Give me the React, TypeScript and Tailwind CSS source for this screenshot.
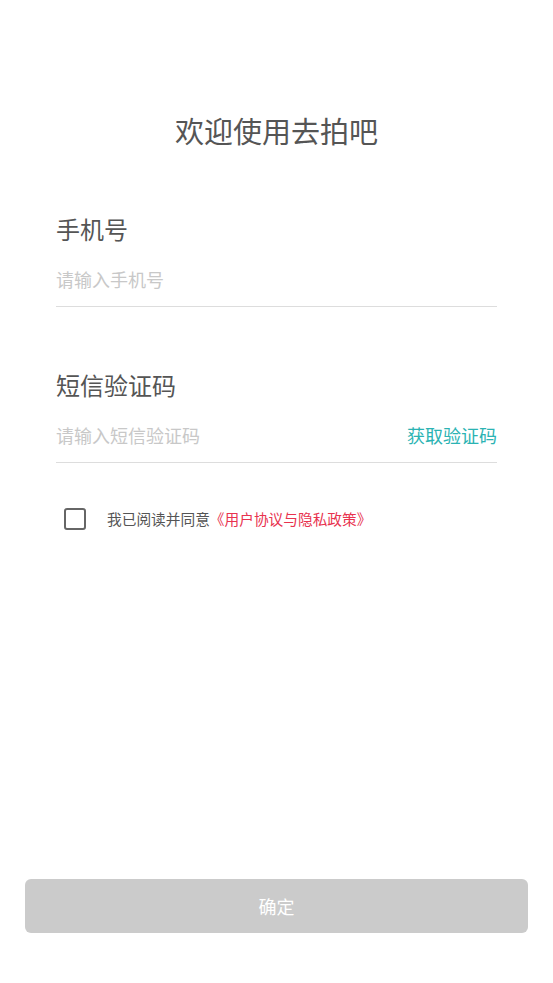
import React, { useState } from 'react'

const font = { fontFamily: '"Noto Sans CJK SC", "Noto Sans", sans-serif' }

const Field = ({ label, placeholder, action }: { label: string; placeholder: string; action?: string }) => {
  return (
    <div className="flex flex-col">
      <div className="text-[24px] leading-[30px] text-[#555555]">{label}</div>
      <div className="mt-[13px] flex h-[50px] items-center justify-between border-b border-[#dddddd] pb-[4px]">
        <input
          className="w-full bg-transparent text-[18px] text-[#555555] outline-none placeholder:text-[#c8c8c8]"
          placeholder={placeholder}
          style={font}
        />
        {action && <span className="shrink-0 text-[18px] text-[#2bb3b3]">{action}</span>}
      </div>
    </div>
  )
}

export default function App() {
  const [checked, setChecked] = useState(false)

  return (
    <div className="flex min-h-[983px] w-full flex-col bg-white" style={font}>
      {/* title */}
      <h1 className="pt-[112px] text-center text-[29px] leading-[36px] text-[#555555]">欢迎使用去拍吧</h1>

      <div className="mt-[66px] flex flex-col gap-[63px] px-14">
        <Field label="手机号" placeholder="请输入手机号" />
        <Field label="短信验证码" placeholder="请输入短信验证码" action="获取验证码" />
      </div>

      {/* agreement */}
      <div className="mt-[45px] flex items-center pl-[64px]">
        <button
          onClick={() => setChecked(!checked)}
          className="flex h-[22px] w-[22px] items-center justify-center rounded-[3px] border-2 border-[#666666]"
        >
          {checked && <span className="h-[10px] w-[10px] bg-[#666666]" />}
        </button>
        <p className="ml-[21px] text-[14.7px] text-[#555555]">
          我已阅读并同意<span className="text-[#e8334f]">《用户协议与隐私政策》</span>
        </p>
      </div>

      <div className="flex-1" />

      <button className="mx-[25px] mb-[50px] h-[54px] rounded-[6px] bg-[#cbcbcb] text-[18px] text-white">确定</button>
    </div>
  )
}
